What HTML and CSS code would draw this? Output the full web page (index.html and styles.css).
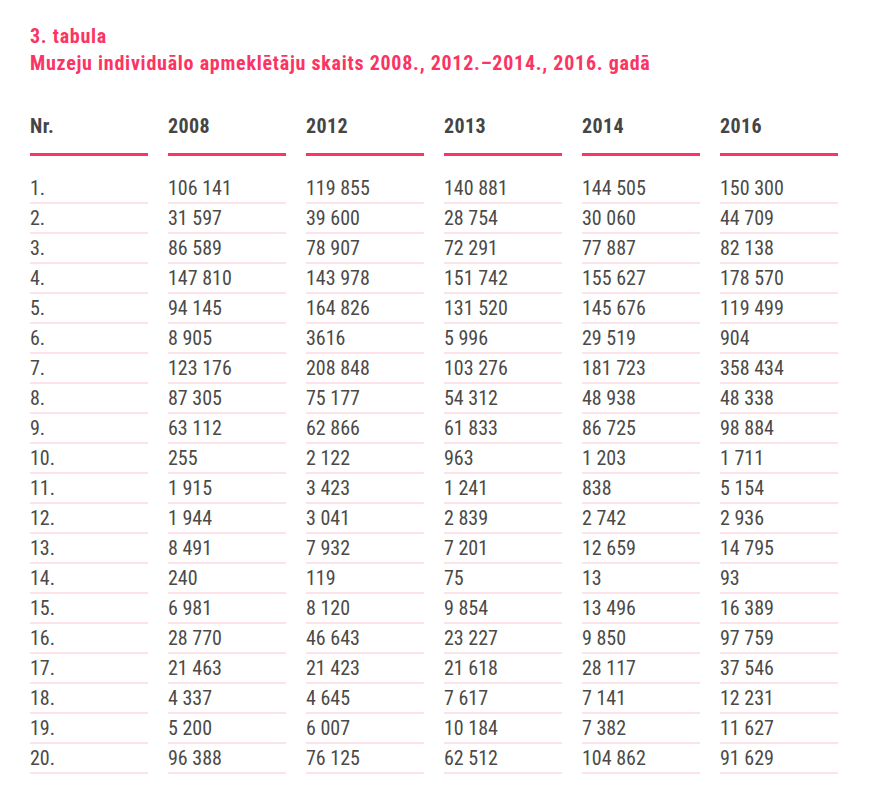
FILE: index.html
```html
<!DOCTYPE html>
<html lang="lv">
<head>
<meta charset="utf-8">
<title>3. tabula</title>
<link rel="stylesheet" href="styles.css">
</head>
<body>
<div class="page">
  <div class="caption">
    <div class="caption-num">3. tabula</div>
    <div class="caption-title">Muzeju individuālo apmeklētāju skaits 2008., 2012.–2014., 2016. gadā</div>
  </div>
  <div class="table">
    <div class="th">Nr.</div><div class="th">2008</div><div class="th">2012</div><div class="th">2013</div><div class="th">2014</div><div class="th">2016</div>
    <div class="td">1.</div><div class="td">106 141</div><div class="td">119 855</div><div class="td">140 881</div><div class="td">144 505</div><div class="td">150 300</div>
    <div class="td">2.</div><div class="td">31 597</div><div class="td">39 600</div><div class="td">28 754</div><div class="td">30 060</div><div class="td">44 709</div>
    <div class="td">3.</div><div class="td">86 589</div><div class="td">78 907</div><div class="td">72 291</div><div class="td">77 887</div><div class="td">82 138</div>
    <div class="td">4.</div><div class="td">147 810</div><div class="td">143 978</div><div class="td">151 742</div><div class="td">155 627</div><div class="td">178 570</div>
    <div class="td">5.</div><div class="td">94 145</div><div class="td">164 826</div><div class="td">131 520</div><div class="td">145 676</div><div class="td">119 499</div>
    <div class="td">6.</div><div class="td">8 905</div><div class="td">3616</div><div class="td">5 996</div><div class="td">29 519</div><div class="td">904</div>
    <div class="td">7.</div><div class="td">123 176</div><div class="td">208 848</div><div class="td">103 276</div><div class="td">181 723</div><div class="td">358 434</div>
    <div class="td">8.</div><div class="td">87 305</div><div class="td">75 177</div><div class="td">54 312</div><div class="td">48 938</div><div class="td">48 338</div>
    <div class="td">9.</div><div class="td">63 112</div><div class="td">62 866</div><div class="td">61 833</div><div class="td">86 725</div><div class="td">98 884</div>
    <div class="td">10.</div><div class="td">255</div><div class="td">2 122</div><div class="td">963</div><div class="td">1 203</div><div class="td">1 711</div>
    <div class="td">11.</div><div class="td">1 915</div><div class="td">3 423</div><div class="td">1 241</div><div class="td">838</div><div class="td">5 154</div>
    <div class="td">12.</div><div class="td">1 944</div><div class="td">3 041</div><div class="td">2 839</div><div class="td">2 742</div><div class="td">2 936</div>
    <div class="td">13.</div><div class="td">8 491</div><div class="td">7 932</div><div class="td">7 201</div><div class="td">12 659</div><div class="td">14 795</div>
    <div class="td">14.</div><div class="td">240</div><div class="td">119</div><div class="td">75</div><div class="td">13</div><div class="td">93</div>
    <div class="td">15.</div><div class="td">6 981</div><div class="td">8 120</div><div class="td">9 854</div><div class="td">13 496</div><div class="td">16 389</div>
    <div class="td">16.</div><div class="td">28 770</div><div class="td">46 643</div><div class="td">23 227</div><div class="td">9 850</div><div class="td">97 759</div>
    <div class="td">17.</div><div class="td">21 463</div><div class="td">21 423</div><div class="td">21 618</div><div class="td">28 117</div><div class="td">37 546</div>
    <div class="td">18.</div><div class="td">4 337</div><div class="td">4 645</div><div class="td">7 617</div><div class="td">7 141</div><div class="td">12 231</div>
    <div class="td">19.</div><div class="td">5 200</div><div class="td">6 007</div><div class="td">10 184</div><div class="td">7 382</div><div class="td">11 627</div>
    <div class="td">20.</div><div class="td">96 388</div><div class="td">76 125</div><div class="td">62 512</div><div class="td">104 862</div><div class="td">91 629</div>
  </div>
</div>
</body>
</html>
```

FILE: styles.css
```css
html, body {
  margin: 0;
  padding: 0;
  background: #ffffff;
}

.page {
  padding: 23px 30px 0 30px;
  font-family: "Roboto Condensed", "Roboto", "DejaVu Sans", sans-serif;
}

.caption {
  color: #fb3464;
  font-weight: 700;
  font-size: 20px;
  line-height: 27px;
  letter-spacing: 0.75px;
}

.table {
  margin-top: 36px;
  display: grid;
  grid-template-columns: repeat(6, 118px);
  column-gap: 20px;
}

.th {
  color: #454545;
  font-weight: 700;
  font-size: 20px;
  line-height: 26px;
  letter-spacing: 0.4px;
  height: 40px;
  border-bottom: 3px solid #ff3366;
  margin-bottom: 18px;
}

.td {
  color: #4a4a4a;
  font-size: 20px;
  line-height: 28px;
  height: 28px;
  border-bottom: 2px solid #fde2ea;
}
```
